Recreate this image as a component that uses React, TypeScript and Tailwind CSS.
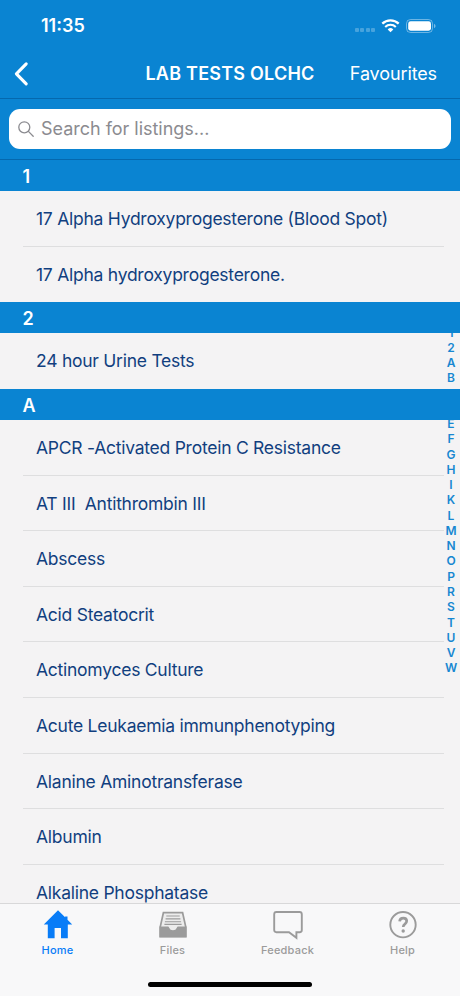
import type { ReactNode } from "react";

type Section = { title: string; rows: string[] };

const sections: Section[] = [
  { title: "1", rows: ["17 Alpha Hydroxyprogesterone (Blood Spot)", "17 Alpha hydroxyprogesterone."] },
  { title: "2", rows: ["24 hour Urine Tests"] },
  {
    title: "A",
    rows: [
      "APCR -Activated Protein C Resistance",
      "AT III  Antithrombin III",
      "Abscess",
      "Acid Steatocrit",
      "Actinomyces Culture",
      "Acute Leukaemia immunphenotyping",
      "Alanine Aminotransferase",
      "Albumin",
      "Alkaline Phosphatase",
    ],
  },
];

const indexLetters = "12ABCDEFGHIKLMNOPRSTUVW".split("");

function StatusBar() {
  return (
    <div className="flex h-[50px] items-center pl-[41px] pr-[24px] pt-[2px]">
      <span className="-mt-px text-[18px] font-semibold">11:35</span>
      <div className="ml-auto flex items-center">
        <div className="mt-[8px] flex gap-[1.7px]">
          {[0, 1, 2, 3].map((dot) => (
            <span key={dot} className="size-[3.8px] rounded-[1px] bg-white/25" />
          ))}
        </div>
        <svg className="ml-[6px] h-[14px] w-[19px]" viewBox="0 0 19 14" fill="none" stroke="white">
          <path d="M1.3 4.6a11.8 11.8 0 0 1 16.4 0" strokeWidth="2.3" />
          <path d="M4.2 7.9a7.6 7.6 0 0 1 10.6 0" strokeWidth="2.1" />
          <path d="M9.5 13.2 6.7 10.4a4 4 0 0 1 5.6 0Z" fill="white" stroke="none" />
        </svg>
        <svg className="ml-[6px] h-[14px] w-[30px]" viewBox="0 0 30 14">
          <rect x=".5" y=".5" width="26" height="13" rx="4" fill="none" stroke="white" strokeOpacity=".4" />
          <rect x="2.2" y="2.3" width="22.8" height="9.4" rx="2.4" fill="white" />
          <path d="M28 4.8q1.6.8 1.6 2.2T28 9.2Z" fill="white" fillOpacity=".45" />
        </svg>
      </div>
    </div>
  );
}

function NavBar() {
  return (
    <div className="grid h-[49px] grid-cols-[130px_200px_130px] items-center border-b border-[#0568ae]">
      <svg className="ml-[13px] h-[26px] w-[18px]" viewBox="0 0 18 26" fill="none" stroke="white" strokeWidth="3.1" strokeLinecap="round" strokeLinejoin="round">
        <path d="M13.2 2.9 3.4 12.9l9.8 10" />
      </svg>
      <h1 className="-mt-px whitespace-nowrap text-center text-[18px] font-semibold tracking-[0.22px]">LAB TESTS OLCHC</h1>
      <span className="-mt-px whitespace-nowrap pr-[23px] text-right text-[18px] tracking-[-0.12px]">Favourites</span>
    </div>
  );
}

function SearchBar() {
  return (
    <div className="h-[61px] border-b border-[#0568ae] px-[9px] pt-[10px]">
      <div className="flex h-[40px] items-center rounded-[11px] bg-white pl-[9px] text-[#8b8b90]">
        <svg className="size-[16px]" viewBox="0 0 16 16" fill="none" stroke="currentColor" strokeWidth="1.3" strokeLinecap="round">
          <circle cx="6.3" cy="6.3" r="5.5" />
          <path d="m10.4 10.4 4.8 4.8" />
        </svg>
        <span className="-mt-px ml-[7px] text-[18px] tracking-[-0.02px]">Search for listings...</span>
      </div>
    </div>
  );
}

function Tab({ label, active, children }: { label: string; active?: boolean; children: ReactNode }) {
  return (
    <div className={`flex w-[115px] flex-col items-center pt-[6px] ${active ? "text-[#087cf7]" : "text-[#9b9b9b]"}`}>
      <div className="h-[30px]">{children}</div>
      <span className="mt-[2px] text-[11px] font-medium leading-[16px] tracking-[0.2px]">{label}</span>
    </div>
  );
}

export default function App() {
  return (
    <div className="flex h-[996px] w-[460px] flex-col overflow-hidden bg-[#f4f3f4] font-['Inter','Liberation_Sans',sans-serif]">
      <header className="shrink-0 bg-[#0a84d2] text-white">
        <StatusBar />
        <NavBar />
        <SearchBar />
      </header>
      <main className="relative min-h-0 flex-1 overflow-hidden">
        {sections.map((section) => (
          <section key={section.title}>
            <h2 className="relative z-10 flex h-[31.1px] items-center bg-[#0a84d2] pl-[22.5px] pt-[2px] text-[18px] font-semibold text-white">
              {section.title}
            </h2>
            {section.rows.map((row, i) => (
              <div key={row} className="ml-[23px] mr-[16px] h-[55.6px]">
                <div className={`flex h-full items-center whitespace-pre border-b pl-[13px] pt-[1.6px] text-[17.5px] tracking-[-0.25px] text-[#113f7f] ${i === section.rows.length - 1 ? "border-transparent" : "border-[#dededf]"}`}>
                  {row}
                </div>
              </div>
            ))}
          </section>
        ))}
        <nav className="absolute right-[1px] top-[164.5px] w-[16px] text-center text-[12px] font-semibold leading-[15.27px] text-[#1787d1]">
          {indexLetters.map((letter) => (
            <div key={letter}>{letter}</div>
          ))}
        </nav>
      </main>
      <footer className="flex h-[93px] shrink-0 flex-col border-t border-[#d8d8d9] bg-[#f8f8f9]">
        <div className="flex">
          <Tab label="Home" active>
            <svg className="h-[30px] w-[30px]" viewBox="0 0 30 30" fill="currentColor">
              <path d="M15 .3.8 14.4h4v13.8h6.8V18h6.4v10.2h6.8V14.4h4.4l-4.7-4.7V6.6h-2.4v.7Z" />
            </svg>
          </Tab>
          <Tab label="Files">
            <svg className="h-[30px] w-[28px]" viewBox="0 0 28 30">
              <path d="M4.4 2.7h19.2L26.8 17v9.6H1.2V17Z" fill="#ececec" stroke="currentColor" strokeWidth="1.7" />
              <path d="M.5 16.6h8.2q1.2 0 1.6 1.3.8 2.4 3.7 2.4t3.7-2.4q.4-1.3 1.6-1.3h8.2v10.6H.5Z" fill="currentColor" />
              <path d="M7.3 6h13.4M6.6 8.9h14.8M5.9 11.7h16.2M5.4 14.4h17.2" stroke="currentColor" strokeWidth="1.1" />
            </svg>
          </Tab>
          <Tab label="Feedback">
            <svg className="h-[30px] w-[30px]" viewBox="0 0 30 30" fill="none" stroke="currentColor" strokeWidth="1.9">
              <path d="M3.4 2h23.2q2.2 0 2.2 2.4V20q0 2.2-2.2 2.2h-3.2v5.6l-7.4-5.6H3.4Q1.2 22.2 1.2 20V4.4Q1.2 2 3.4 2Z" />
            </svg>
          </Tab>
          <Tab label="Help">
            <svg className="h-[30px] w-[30px]" viewBox="0 0 30 30" fill="none" stroke="currentColor">
              <circle cx="15" cy="14.7" r="12.7" strokeWidth="1.9" />
              <path d="M11.6 11.4q.4-3.2 3.7-3.2 3.4 0 3.4 2.9 0 1.6-1.6 2.7-1.9 1.3-1.9 3.3" strokeWidth="2.7" />
              <circle cx="15.2" cy="21" r="1.7" fill="currentColor" stroke="none" />
            </svg>
          </Tab>
        </div>
        <div className="mx-auto mb-[9px] mt-auto h-[5.5px] w-[164px] rounded-full bg-black" />
      </footer>
    </div>
  );
}
